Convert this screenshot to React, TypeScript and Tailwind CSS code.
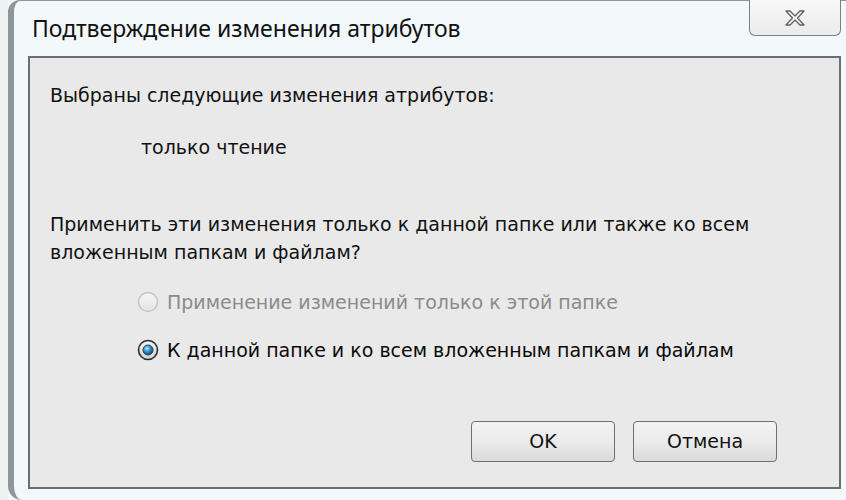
import React from "react";

function Radio({ checked }: { checked: boolean }) {
  if (checked) {
    return (
      <svg width="22" height="22" viewBox="0 0 22 22" className="shrink-0">
        <defs>
          <radialGradient id="rg1" cx="0.4" cy="0.35" r="0.7">
            <stop offset="0" stopColor="#bfe6fb" />
            <stop offset="0.5" stopColor="#2a8cc4" />
            <stop offset="1" stopColor="#0d3f66" />
          </radialGradient>
          <linearGradient id="rgo" x1="0" y1="0" x2="0" y2="1">
            <stop offset="0" stopColor="#f4f4f4" />
            <stop offset="1" stopColor="#d0d0d0" />
          </linearGradient>
        </defs>
        <circle cx="11" cy="11" r="9.5" fill="url(#rgo)" stroke="#2c2c2c" strokeWidth="1.6" />
        <circle cx="11" cy="11" r="5" fill="url(#rg1)" stroke="#0f2f4a" strokeWidth="0.8" />
      </svg>
    );
  }
  return (
    <svg width="22" height="22" viewBox="0 0 22 22" className="shrink-0">
      <defs>
        <linearGradient id="rgu" x1="0" y1="0" x2="0" y2="1">
          <stop offset="0" stopColor="#f6f6f6" />
          <stop offset="1" stopColor="#e4e4e4" />
        </linearGradient>
      </defs>
      <circle cx="11" cy="11" r="9.5" fill="url(#rgu)" stroke="#c4c4c4" strokeWidth="1.4" />
    </svg>
  );
}

export default function App() {
  const titleFont = { fontFamily: '"Noto Sans", "DejaVu Sans", sans-serif' };
  const bodyFont = { fontFamily: '"DejaVu Sans", "Noto Sans", sans-serif' };
  return (
    <div className="w-[846px] h-[500px] bg-[#f4f6f7] overflow-hidden flex">
      <div className="w-[8px] shrink-0 bg-[#eef1f2]" />
      <div className="flex-1 flex flex-col rounded-tl-[12px] rounded-bl-[14px] border-l-[6px] border-t-[1px] border-[#8f969a] bg-[#f3f8fa]">
        <div className="h-[55px] shrink-0 flex items-start justify-between">
          <div className="pl-[18px] pt-[12px] text-[23px] leading-[30px] text-[#111]" style={titleFont}>
            Подтверждение изменения атрибутов
          </div>
          <div className="mr-[5px] w-[92px] h-[36px] -mt-[1px] rounded-b-[6px] border border-t-0 border-[#7d7f82] bg-gradient-to-b from-[#f8f8f8] to-[#ebebeb] flex items-center justify-center">
            <svg width="26" height="20" viewBox="0 0 26 20">
              <path
                d="M4 3 L8 3 L13 8 L18 3 L22 3 L15.5 10 L22 17 L18 17 L13 12 L8 17 L4 17 L10.5 10 Z"
                fill="#fbfbfb"
                stroke="#5d6266"
                strokeWidth="1.4"
                strokeLinejoin="round"
              />
            </svg>
          </div>
        </div>
        <div
          className="ml-[14px] mr-[5px] h-[433px] shrink-0 border-[2px] border-[#6b6d70] bg-[#e9e9e9] flex flex-col text-[19px] text-[#111]"
          style={bodyFont}
        >
          <div className="pl-[20px] pt-[23px] leading-[28px]">Выбраны следующие изменения атрибутов:</div>
          <div className="pl-[111px] pt-[24px] leading-[28px]">только чтение</div>
          <div className="pl-[20px] pt-[49px] leading-[28px]">
            Применить эти изменения только к данной папке или также ко всем
            <br />
            вложенным папкам и файлам?
          </div>
          <div className="pl-[107px] pt-[22px] flex items-center gap-[8px] leading-[28px] text-[#8b8b8b]">
            <Radio checked={false} />
            <span>Применение изменений только к этой папке</span>
          </div>
          <div className="pl-[107px] pt-[20px] flex items-center gap-[8px] leading-[28px] text-[#0a0a0a]">
            <Radio checked={true} />
            <span>К данной папке и ко всем вложенным папкам и файлам</span>
          </div>
          <div className="flex-1" />
          <div className="flex justify-end gap-[18px] pr-[62px] pb-[25px]">
            <button className="w-[144px] h-[41px] rounded-[4px] border border-[#6f6f6f] bg-gradient-to-b from-[#f3f3f3] via-[#ebebeb] to-[#dadada] text-[19px] text-[#111]">
              OK
            </button>
            <button className="w-[144px] h-[41px] rounded-[4px] border border-[#6f6f6f] bg-gradient-to-b from-[#f3f3f3] via-[#ebebeb] to-[#dadada] text-[19px] text-[#111]">
              Отмена
            </button>
          </div>
        </div>
        <div className="flex-1" />
      </div>
    </div>
  );
}
